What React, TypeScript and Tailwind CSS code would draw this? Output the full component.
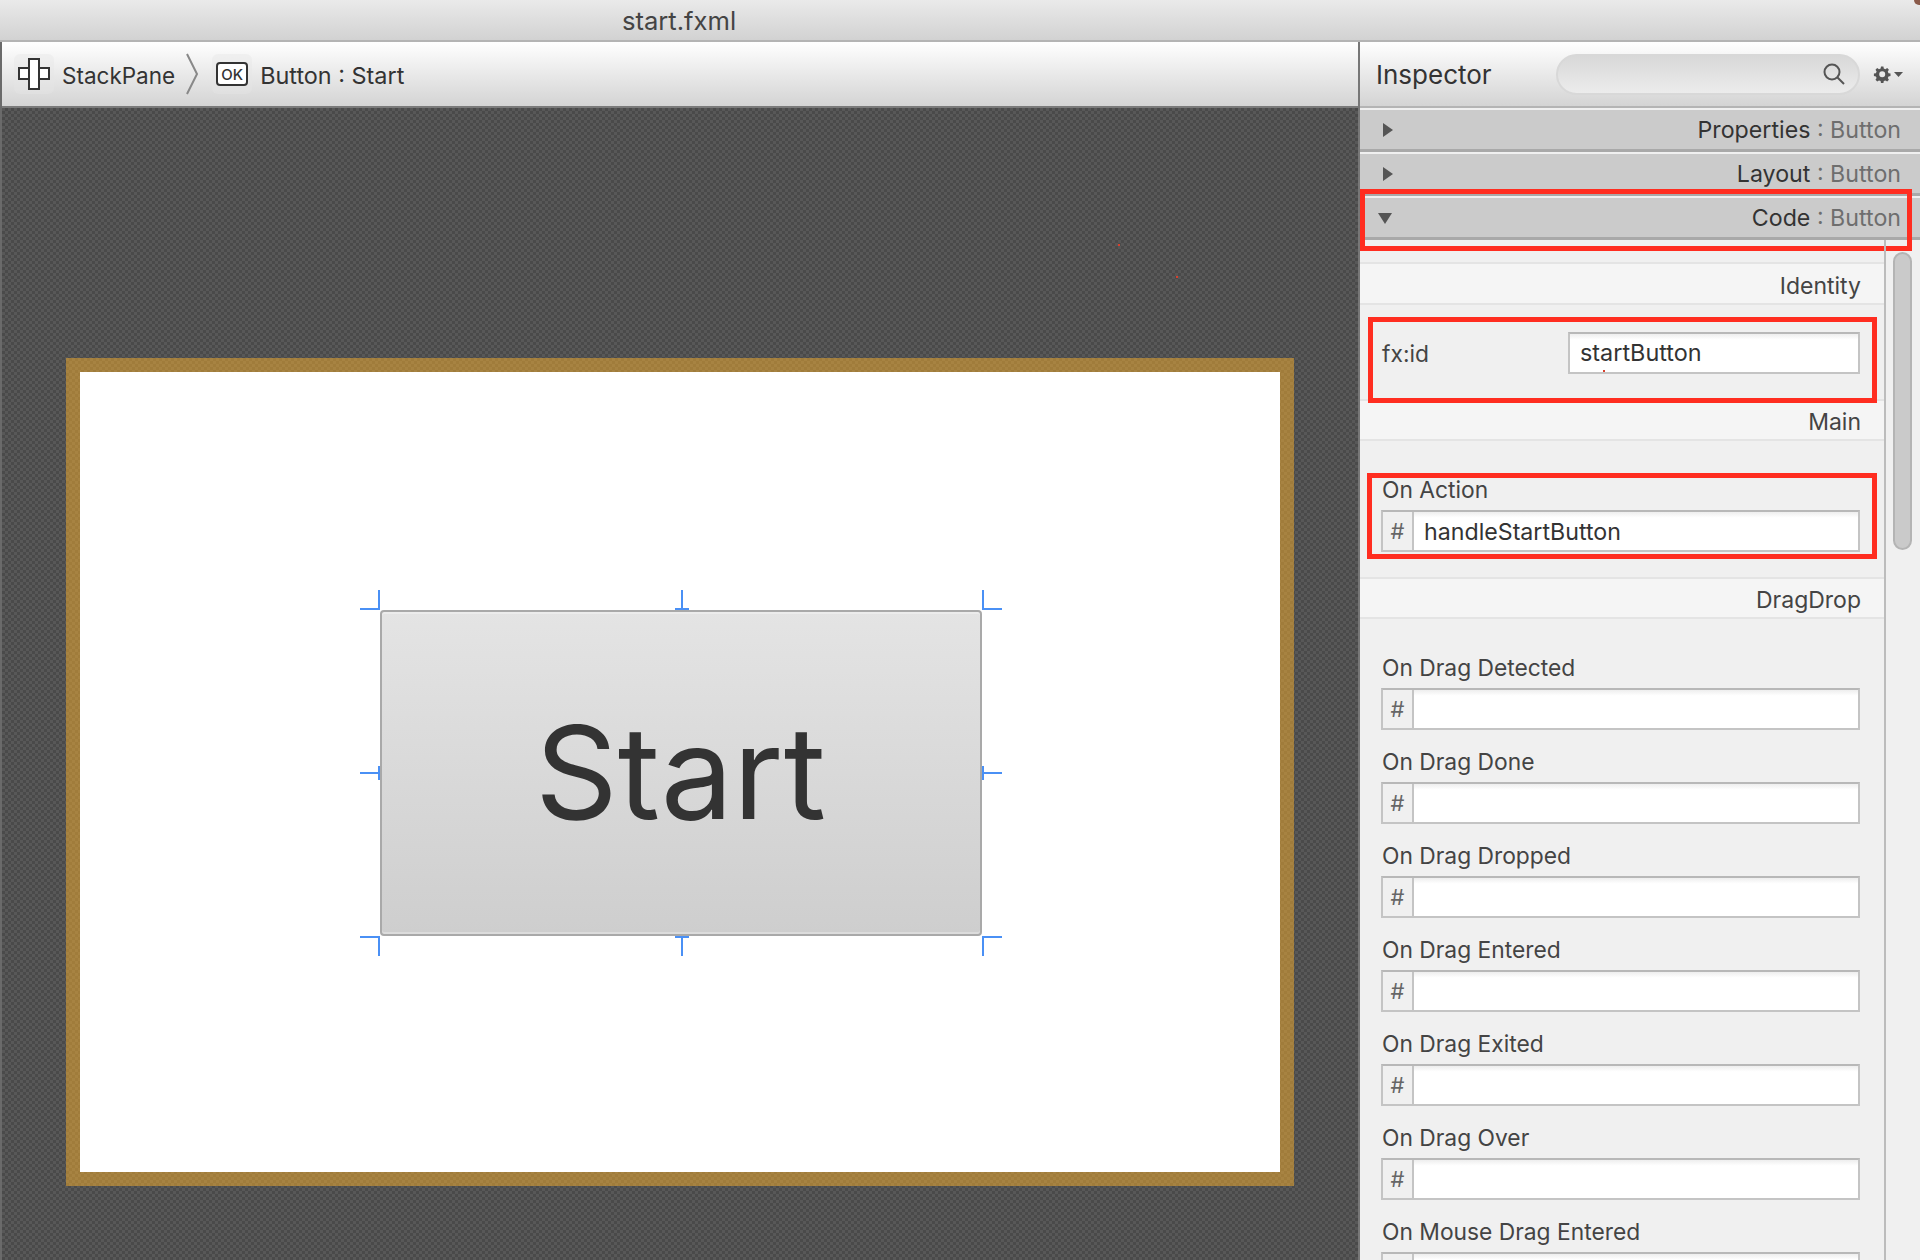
const sans = "font-['Inter','Liberation_Sans',sans-serif]"

const events = [
  "On Drag Detected",
  "On Drag Done",
  "On Drag Dropped",
  "On Drag Entered",
  "On Drag Exited",
  "On Drag Over",
  "On Mouse Drag Entered",
]

const StackIcon = () => (
  <div className="rounded-md bg-[#e6e6e6]/40">
    <svg width="40" height="40" viewBox="0 0 40 40" fill="none" stroke="#333" strokeWidth="2" className="block">
      <rect x="5" y="14" width="30" height="11" fill="#fff" />
      <rect x="15" y="5" width="10" height="30" fill="#fff" />
    </svg>
  </div>
)

const OkIcon = () => (
  <div className="flex h-[40px] w-[40px] items-center justify-center rounded-md bg-[#e6e6e6]/40">
    <div className="flex h-[24px] w-[32px] items-center justify-center rounded-[4px] border-2 border-[#333] bg-white text-[15px] font-medium leading-none text-[#333]">
      OK
    </div>
  </div>
)

const Handle = ({ className }: { className: string }) => <div className={`absolute bg-[#4a90f5] ${className}`} />

const Speck = ({ className }: { className: string }) => <div className={`absolute h-[2px] w-[2px] bg-[#d8402c] ${className}`} />

const Panel = ({ name, open }: { name: string; open?: boolean }) => (
  <div className="flex h-[44px] items-center justify-between border-b-[3px] border-b-[#a9a9a9] border-t-2 border-t-[#f0f0f0] bg-[#cbcbcb] pl-[20px] pr-[19px] text-[23.2px]">
    {open ? (
      <div className="h-0 w-0 -translate-x-[2px] translate-y-[1px] border-x-[7px] border-t-[11px] border-x-transparent border-t-[#555]" />
    ) : (
      <div className="h-0 w-0 translate-x-[3px] border-y-[7px] border-l-[10px] border-y-transparent border-l-[#555]" />
    )}
    <div className="pt-[2px] text-[#333]">
      {name} <span className="text-[#6e6e6e]">: Button</span>
    </div>
  </div>
)

const SectionHead = ({ title, className }: { title: string; className?: string }) => (
  <div className={`flex items-center justify-end border-y-2 border-[#e4e4e4] bg-[#f5f5f5] pr-[23px] pt-[5px] text-[23px] text-[#444] ${className ?? "h-[42px]"}`}>
    {title}
  </div>
)

const HashInput = ({ value }: { value?: string }) => (
  <div className="-ml-[1px] flex h-[42px] w-[479px] border-2 border-[#c4c4c4] border-t-[#b8b8b8] bg-white">
    <div className="flex w-[31px] items-center justify-center border-r-2 border-[#c4c4c4] bg-[#f0f0f0] text-[22px] text-[#666]">
      #
    </div>
    <div className="flex-1 bg-gradient-to-b from-[#eeeeee] from-0% to-white to-15% pl-[10px] text-[23.2px] leading-[40px] text-[#333]">
      {value}
    </div>
  </div>
)

export default function App() {
  return (
    <div className={`relative flex h-[1260px] w-[1920px] flex-col overflow-hidden bg-white ${sans}`}>
      <div className="flex h-[42px] shrink-0 justify-center border-b-2 border-[#b4b4b4] bg-gradient-to-b from-[#eaeaea] to-[#d2d2d2] pr-[562px] pt-[6px] text-[25.6px] leading-[30px] text-[#444]">
        start.fxml
      </div>
      {/* window corner of the cropped capture */}
      <div className="absolute right-0 top-0 h-[5px] w-[6px] rounded-bl-full bg-[#8a5a4a]" />
      <div className="flex min-h-0 flex-1">
        {/* canvas side */}
        <div className="flex w-[1358px] shrink-0 flex-col border-l-2 border-[#6a6a6a]">
          <div className="flex h-[66px] shrink-0 items-center border-b-2 border-[#7a7a7a] bg-gradient-to-b from-white to-[#d4d4d4] pl-[12px] text-[24px] text-[#333]">
            <StackIcon />
            <div className="ml-[8px] mt-[4px] text-[22.5px]">StackPane</div>
            <svg width="14" height="42" viewBox="0 0 14 42" fill="none" stroke="#888" strokeWidth="2" className="ml-[10px]">
              <path d="M2 1 L12 21 L2 41" />
            </svg>
            <div className="ml-[13px]">
              <OkIcon />
            </div>
            <div className="ml-[8px] mt-[4px] text-[23.4px]">Button : Start</div>
          </div>
          <div className="relative flex-1 bg-[repeating-conic-gradient(#4a4a4a_0_25%,#585858_0_50%)] bg-[length:6px_6px] pl-[64px] pt-[250px]">
            <Speck className="left-[1116px] top-[136px]" />
            <Speck className="left-[1174px] top-[168px]" />
            <div className="h-[828px] w-[1228px] bg-[repeating-conic-gradient(#a07c3b_0_25%,#a78342_0_50%)] bg-[length:6px_6px] p-[14px]">
              <div className="flex h-[800px] items-center justify-center bg-white pl-[1px] pt-[2px]">
                <div className="relative h-[326px] w-[602px]">
                  <div className="flex h-full items-center justify-center rounded-[4px] border-2 border-[#a9a9a9] bg-gradient-to-b from-[#e4e4e4] to-[#cecece] pb-[2px] text-[129px] leading-none text-[#333] shadow-[inset_0_2px_0_#ececec,inset_0_-2px_0_#dcdcdc]">
                    Start
                  </div>
                  {/* resize handles */}
                  <Handle className="-left-[20px] -top-[2px] h-[2px] w-[20px]" />
                  <Handle className="-left-[2px] -top-[20px] h-[20px] w-[2px]" />
                  <Handle className="left-[295px] -top-[2px] h-[2px] w-[14px]" />
                  <Handle className="left-[301px] -top-[20px] h-[20px] w-[2px]" />
                  <Handle className="-right-[20px] -top-[2px] h-[2px] w-[18px]" />
                  <Handle className="-right-[2px] -top-[20px] h-[20px] w-[2px]" />
                  <Handle className="-left-[20px] top-[162px] h-[2px] w-[20px]" />
                  <Handle className="-left-[2px] top-[156px] h-[14px] w-[2px]" />
                  <Handle className="-right-[20px] top-[162px] h-[2px] w-[18px]" />
                  <Handle className="-right-[2px] top-[156px] h-[14px] w-[2px]" />
                  <Handle className="-left-[20px] -bottom-[2px] h-[2px] w-[20px]" />
                  <Handle className="-left-[2px] -bottom-[20px] h-[20px] w-[2px]" />
                  <Handle className="left-[295px] -bottom-[2px] h-[2px] w-[14px]" />
                  <Handle className="left-[301px] -bottom-[20px] h-[20px] w-[2px]" />
                  <Handle className="-right-[20px] -bottom-[2px] h-[2px] w-[18px]" />
                  <Handle className="-right-[2px] -bottom-[20px] h-[20px] w-[2px]" />
                </div>
              </div>
            </div>
          </div>
        </div>
        {/* inspector */}
        <div className="flex min-w-0 flex-1 flex-col border-l-2 border-[#777] bg-[#f0f0f0]">
          <div className="flex h-[66px] shrink-0 items-center border-b-2 border-[#b4b4b4] bg-gradient-to-b from-white to-[#d4d4d4] pl-[16px] text-[26px] text-[#333]">
            <div className="w-[180px]">Inspector</div>
            <div className="flex h-[41px] w-[304px] items-center justify-end rounded-full border-2 border-[#d8d8d8] bg-gradient-to-b from-[#d8d8d8] to-[#ececec] pr-[12px]">
              <svg width="24" height="24" viewBox="0 0 24 24" fill="none" stroke="#555" strokeWidth="2">
                <circle cx="10" cy="10" r="7.5" />
                <path d="M15.5 15.5 L22 22" />
              </svg>
            </div>
            <svg width="30" height="18" viewBox="0 0 30 18" className="ml-[13px]" fill="#555">
              <path d="M8 1.5 h2.4 l.4 2 1.6.7 1.8-1.1 1.7 1.7-1.1 1.8.7 1.6 2 .4 v2.4 l-2 .4-.7 1.6 1.1 1.8-1.7 1.7-1.8-1.1-1.6.7-.4 2 h-2.4 l-.4-2-1.6-.7-1.8 1.1-1.7-1.7 1.1-1.8-.7-1.6-2-.4 v-2.4 l2-.4.7-1.6-1.1-1.8 1.7-1.7 1.8 1.1 1.6-.7z M9.2 6.2 a3 3 0 1 0 0 6 a3 3 0 1 0 0-6z" fillRule="evenodd" />
              <path d="M21 7 h9 l-4.5 5z" />
            </svg>
          </div>
          <Panel name="Properties" />
          <Panel name="Layout" />
          <div className="relative">
            <Panel name="Code" open />
            <div className="absolute -top-[7px] bottom-[-11px] left-0 right-[8px] border-[5px] border-[#ff2d20]" />
          </div>
          <div className="relative flex min-h-0 flex-1">
            <div className="w-[526px] shrink-0 border-r-2 border-[#bcbcbc] pt-[22px]">
              <SectionHead title="Identity" className="h-[43px]" />
              <div className="relative flex h-[94px] pl-[21px] pt-[27px] text-[22.8px] leading-[44px] text-[#444]">
                <div className="w-[187px] pl-[1px]">fx:id</div>
                <div className="relative h-[42px] w-[292px] border-2 border-[#c4c4c4] border-t-[#b8b8b8] bg-gradient-to-b from-[#eeeeee] from-0% to-white to-15% pl-[10px] text-[23.4px] leading-[38px] text-[#333]">
                  startButton
                  <Speck className="bottom-0 left-[33px]" />
                </div>
                <div className="absolute left-[8px] right-[7px] top-[12px] h-[86px] border-[5px] border-[#ff2d20]" />
              </div>
              <SectionHead title="Main" />
              <div className="relative h-[136px] pl-[22px] text-[22.8px] text-[#444]">
                <div className="pt-[33px] leading-[32px]">On Action</div>
                <div className="pt-[4px]">
                  <HashInput value="handleStartButton" />
                </div>
                <div className="absolute left-[7px] right-[7px] top-[32px] h-[86px] border-[5px] border-[#ff2d20]" />
              </div>
              <SectionHead title="DragDrop" />
              <div className="pl-[22px] pt-[26px] text-[22.8px] leading-[32px] text-[#444]">
                {events.map((name) => (
                  <div key={name} className="h-[94px]">
                    <div className="h-[43px] pt-[7px]">{name}</div>
                    <HashInput />
                  </div>
                ))}
              </div>
            </div>
            <div className="ml-[7px] mt-[12px] h-[298px] w-[19px] rounded-b-[10px] rounded-t-[10px] border-2 border-[#b4b4b4] bg-[#cacaca]" />
          </div>
        </div>
      </div>
    </div>
  )
}
